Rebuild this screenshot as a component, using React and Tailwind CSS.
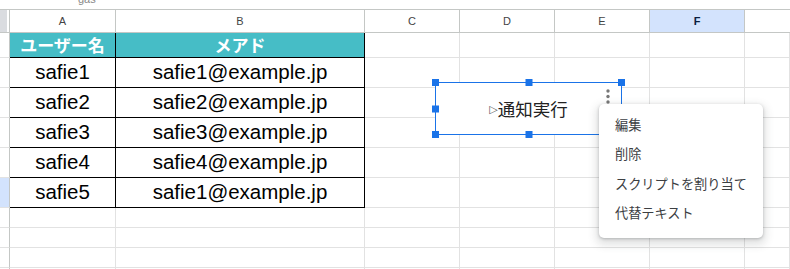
import React from "react";

const cols = [
  { k: "A", w: "w-[106px]" },
  { k: "B", w: "w-[249px]" },
  { k: "C", w: "w-[95px]" },
  { k: "D", w: "w-[95px]" },
  { k: "E", w: "w-[95px]" },
  { k: "F", w: "w-[95px]" },
  { k: "G", w: "flex-1" },
];

const data = [
  ["safie1", "safie1@example.jp"],
  ["safie2", "safie2@example.jp"],
  ["safie3", "safie3@example.jp"],
  ["safie4", "safie4@example.jp"],
  ["safie5", "safie1@example.jp"],
];

const jp = { fontFamily: '"Noto Sans CJK JP", "Noto Sans", sans-serif' };
const ls = { fontFamily: '"Liberation Sans", Arial, sans-serif' };

function EmptyCells({ h }) {
  return (
    <>
      {cols.slice(2).map((c) => (
        <div key={c.k} className={`${c.w} ${h} shrink-0 border-r border-b border-[#e2e2e2]`} />
      ))}
    </>
  );
}

export default function App() {
  return (
    <div className="relative w-[790px] h-[269px] overflow-hidden bg-white" style={ls}>
      {/* top strip */}
      <div className="h-[9px] overflow-hidden pl-[78px]">
        <div className="text-[11px] leading-[11px] text-[#888] -mt-[6px]">gas</div>
      </div>
      {/* column header */}
      <div className="flex h-[24px] border-t border-b border-[#c4c7c5]">
        <div className="w-[10px] shrink-0 border-r border-[#c4c7c5] flex">
          <div className="w-[7px] bg-[#dadce0]" />
        </div>
        {cols.map((c) => (
          <div
            key={c.k}
            className={`${c.w} shrink-0 border-r border-[#c4c7c5] flex items-center justify-center text-[11px] ${
              c.k === "F" ? "bg-[#d3e3fd] text-[#0b1f3f] font-bold" : "text-[#444]"
            }`}
          >
            {c.k === "G" ? <span className="ml-[88px] text-[#c88a3a]">G</span> : c.k}
          </div>
        ))}
      </div>
      {/* row 1 header */}
      <div className="flex">
        <div className="w-[10px] h-[25px] shrink-0 border-r border-b border-r-[#c4c7c5] border-b-[#e2e2e2]" />
        <div className="w-[106px] h-[25px] shrink-0 bg-[#46bdc6] border-r border-b border-black flex items-center justify-center text-white font-bold text-[17px]" style={jp}>
          ユーザー名
        </div>
        <div className="w-[249px] h-[25px] shrink-0 bg-[#46bdc6] border-r border-b border-black flex items-center justify-center text-white font-bold text-[17px]" style={jp}>
          メアド
        </div>
        <EmptyCells h="h-[25px]" />
      </div>
      {data.map((r, i) => (
        <div key={i} className="flex">
          <div
            className={`w-[10px] h-[30px] shrink-0 border-r border-b border-r-[#c4c7c5] border-b-[#e2e2e2] ${
              i === 4 ? "bg-[#d3e3fd]" : ""
            }`}
          />
          <div className="w-[106px] h-[30px] shrink-0 border-r border-b border-black flex items-center justify-center text-[20.5px] text-black">
            {r[0]}
          </div>
          <div className="w-[249px] h-[30px] shrink-0 border-r border-b border-black flex items-center justify-center text-[20.5px] text-black">
            {r[1]}
          </div>
          <EmptyCells h="h-[30px]" />
        </div>
      ))}
      {[0, 1, 2, 3].map((i) => (
        <div key={i} className="flex">
          <div className="w-[10px] h-[20px] shrink-0 border-r border-b border-r-[#c4c7c5] border-b-[#e2e2e2]" />
          <div className="w-[106px] h-[20px] shrink-0 border-r border-b border-[#e2e2e2]" />
          <div className="w-[249px] h-[20px] shrink-0 border-r border-b border-[#e2e2e2]" />
          <EmptyCells h="h-[20px]" />
        </div>
      ))}

      {/* drawing button */}
      <div className="absolute left-[435px] top-[82px] w-[187px] h-[53px] bg-white border border-[#1a73e8] flex items-center justify-center pt-[2px]">
        <span className="text-[11px] text-[#555] mt-[2px]" style={{ fontFamily: '"DejaVu Sans", sans-serif' }}>▷</span>
        <span className="text-[17.5px] text-[#222]" style={jp}>通知実行</span>
        <svg className="absolute right-[11px] top-[5px]" width="4" height="17" viewBox="0 0 4 17">
          <circle cx="2" cy="3" r="1.7" fill="#777" />
          <circle cx="2" cy="8.5" r="1.7" fill="#777" />
          <circle cx="2" cy="14" r="1.7" fill="#777" />
        </svg>
        <div className="absolute -left-[4px] -top-[4px] w-[7px] h-[7px] bg-[#1a73e8]" />
        <div className="absolute left-1/2 -translate-x-1/2 -top-[4px] w-[7px] h-[7px] bg-[#1a73e8]" />
        <div className="absolute -right-[4px] -top-[4px] w-[7px] h-[7px] bg-[#1a73e8]" />
        <div className="absolute -left-[4px] top-1/2 -translate-y-1/2 w-[7px] h-[7px] bg-[#1a73e8]" />
        <div className="absolute -left-[4px] -bottom-[4px] w-[7px] h-[7px] bg-[#1a73e8]" />
        <div className="absolute left-1/2 -translate-x-1/2 -bottom-[4px] w-[7px] h-[7px] bg-[#1a73e8]" />
      </div>

      {/* context menu */}
      <div
        className="absolute left-[599px] top-[104px] w-[164px] h-[134px] bg-white rounded-[5px] pt-[6px] shadow-[0_1px_3px_rgba(60,64,67,0.3),0_4px_8px_3px_rgba(60,64,67,0.15)] text-[13.2px] text-[#3c4043]"
        style={jp}
      >
        {["編集", "削除", "スクリプトを割り当て", "代替テキスト"].map((t) => (
          <div key={t} className="h-[29.5px] px-[16px] flex items-center">
            {t}
          </div>
        ))}
      </div>
    </div>
  );
}
